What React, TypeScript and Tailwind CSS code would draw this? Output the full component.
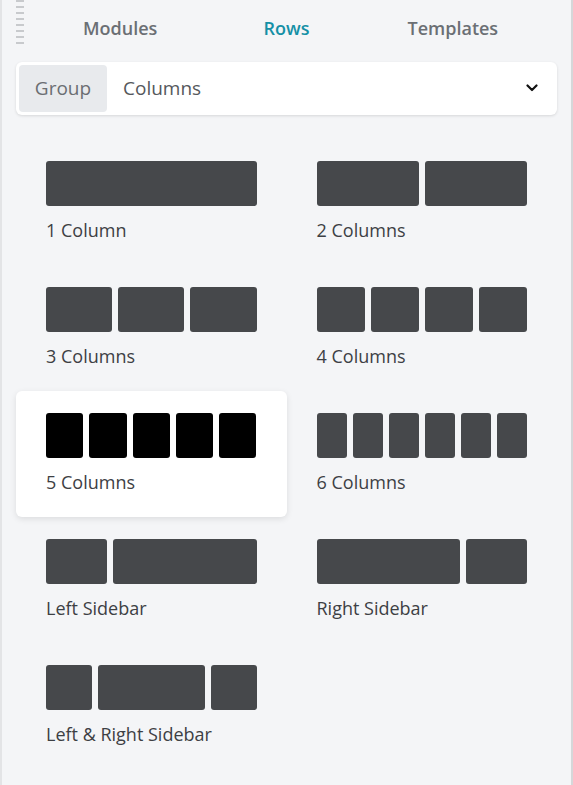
import React from "react";

type Layout = { label: string; cols: string[]; active?: boolean };

const LAYOUTS: Layout[] = [
  { label: "1 Column", cols: ["flex-1"] },
  { label: "2 Columns", cols: ["flex-1", "flex-1"] },
  { label: "3 Columns", cols: ["flex-1", "flex-1", "flex-1"] },
  { label: "4 Columns", cols: ["flex-1", "flex-1", "flex-1", "flex-1"] },
  { label: "5 Columns", cols: ["flex-1", "flex-1", "flex-1", "flex-1", "flex-1"], active: true },
  { label: "6 Columns", cols: ["flex-1", "flex-1", "flex-1", "flex-1", "flex-1", "flex-1"] },
  { label: "Left Sidebar", cols: ["flex-[3]", "flex-[7]"] },
  { label: "Right Sidebar", cols: ["flex-[7]", "flex-[3]"] },
  { label: "Left & Right Sidebar", cols: ["flex-[23]", "flex-[54]", "flex-[23]"] },
];

const TABS = ["Modules", "Rows", "Templates"];

function ChevronDown() {
  return (
    <svg width="12" height="8" viewBox="0 0 12 8" fill="none">
      <path d="M1.5 1.5 6 6l4.5-4.5" stroke="#111" strokeWidth="2.2" strokeLinecap="round" strokeLinejoin="round" />
    </svg>
  );
}

export default function App() {
  return (
    <div
      className="w-[573px] h-[785px] overflow-hidden bg-[#f4f5f7] border-l-2 border-l-[#e3e4e6] border-r-2 border-r-[#d6d7d9] relative"
      style={{ fontFamily: '"Open Sans", "Noto Sans", Arial, sans-serif' }}
    >
      {/* drag handle */}
      <div className="absolute left-[14px] top-0 flex flex-col gap-[4px]">
        {Array.from({ length: 8 }).map((_, i) => (
          <div key={i} className="w-[8px] h-[2px] bg-[#c8cacd]" />
        ))}
      </div>

      <div className="px-[14px]">
        {/* tabs */}
        <div className="grid grid-cols-3 px-[21px] h-[56px] items-center">
          {TABS.map((t) => (
            <div
              key={t}
              className={
                "text-center text-[18px] font-semibold " +
                (t === "Rows" ? "text-[#1590a6]" : "text-[#6b6f74]")
              }
            >
              {t}
            </div>
          ))}
        </div>

        {/* group select */}
        <div className="mt-[6px] h-[53px] bg-white rounded-[6px] shadow-[0_1px_3px_rgba(0,0,0,0.12)] flex items-center p-[3px]">
          <div className="h-full w-[88px] rounded-[4px] bg-[#e8eaed] flex items-center justify-center text-[19px] font-medium text-[#6b6e72]">
            Group
          </div>
          <div className="flex-1 pl-[16px] text-[19px] font-medium text-[#55585c]">Columns</div>
          <div className="pr-[16px] pb-[2px]">
            <ChevronDown />
          </div>
        </div>

        {/* layouts */}
        <div className="mt-[24px] grid grid-cols-2">
          {LAYOUTS.map((l) => (
            <div
              key={l.label}
              className={
                "h-[126px] px-[30px] pt-[22px] rounded-[6px] " +
                (l.active ? "bg-white shadow-[0_2px_6px_rgba(0,0,0,0.10)]" : "")
              }
            >
              <div className="flex gap-[6px] h-[45px]">
                {l.cols.map((c, i) => (
                  <div
                    key={i}
                    className={c + " rounded-[3px] " + (l.active ? "bg-black" : "bg-[#46484b]")}
                  />
                ))}
              </div>
              <div className="mt-[12px] text-[18px] leading-[24px] text-[#3d4044]">{l.label}</div>
            </div>
          ))}
        </div>
      </div>
    </div>
  );
}
